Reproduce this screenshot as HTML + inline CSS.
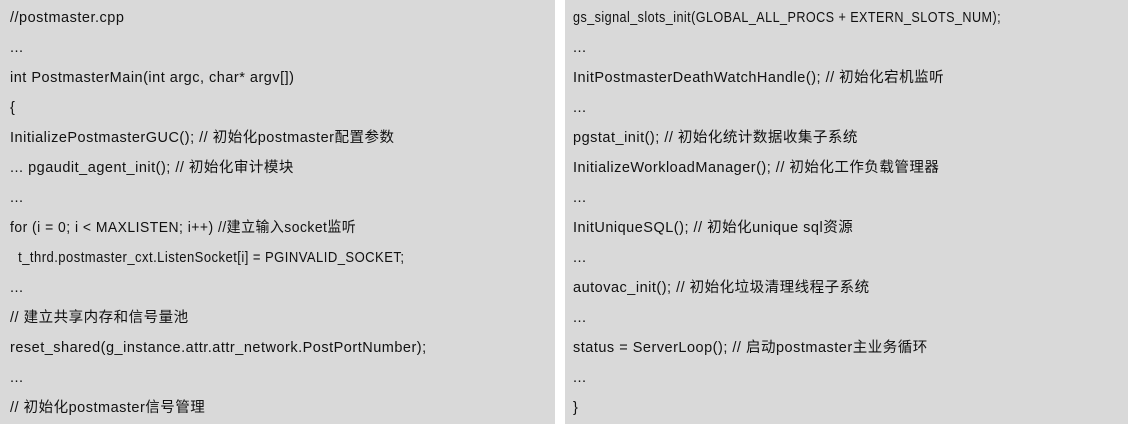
<!DOCTYPE html>
<html><head><meta charset="utf-8"><style>
html,body{margin:0;padding:0;width:1128px;height:424px;background:#fff;overflow:hidden}
.p{position:absolute;top:0;height:424px;background:#d9d9d9}
.l{left:0;width:555px}.r{left:565px;width:563px}
.p div{position:absolute;left:10px;font:14.5px/16px "Liberation Sans","Noto Sans CJK SC",sans-serif;letter-spacing:0.5px;color:#111;white-space:pre;transform-origin:left center}
.r div{left:8px}
</style></head><body>
<div class="p l">
<div style="top:10px">//postmaster.cpp</div>
<div style="top:40px">...</div>
<div style="top:70px">int PostmasterMain(int argc, char* argv[])</div>
<div style="top:100px">{</div>
<div style="top:130px">InitializePostmasterGUC(); // 初始化postmaster配置参数</div>
<div style="top:160px">... pgaudit_agent_init(); // 初始化审计模块</div>
<div style="top:190px">...</div>
<div style="top:220px;transform:scaleX(0.96)">for (i = 0; i &lt; MAXLISTEN; i++) //建立输入socket监听</div>
<div style="top:250px;transform:scaleX(0.9)">  t_thrd.postmaster_cxt.ListenSocket[i] = PGINVALID_SOCKET;</div>
<div style="top:280px">...</div>
<div style="top:310px">// 建立共享内存和信号量池</div>
<div style="top:340px">reset_shared(g_instance.attr.attr_network.PostPortNumber);</div>
<div style="top:370px">...</div>
<div style="top:400px">// 初始化postmaster信号管理</div>
</div>
<div class="p r">
<div style="top:10px;transform:scaleX(0.87)">gs_signal_slots_init(GLOBAL_ALL_PROCS + EXTERN_SLOTS_NUM);</div>
<div style="top:40px">...</div>
<div style="top:70px">InitPostmasterDeathWatchHandle(); // 初始化宕机监听</div>
<div style="top:100px">...</div>
<div style="top:130px">pgstat_init(); // 初始化统计数据收集子系统</div>
<div style="top:160px">InitializeWorkloadManager(); // 初始化工作负载管理器</div>
<div style="top:190px">...</div>
<div style="top:220px">InitUniqueSQL(); // 初始化unique sql资源</div>
<div style="top:250px">...</div>
<div style="top:280px">autovac_init(); // 初始化垃圾清理线程子系统</div>
<div style="top:310px">...</div>
<div style="top:340px">status = ServerLoop(); // 启动postmaster主业务循环</div>
<div style="top:370px">...</div>
<div style="top:400px">}</div>
</div>
</body></html>
